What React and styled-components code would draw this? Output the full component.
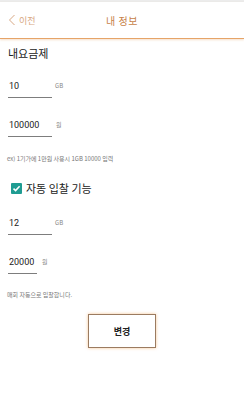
import styled, { createGlobalStyle } from 'styled-components';

const Global = createGlobalStyle`
    html, body {
        margin: 0;
        padding: 0;
        background: #fff;
    }
    body {
        font-family: "Noto Sans CJK KR", "Noto Sans", sans-serif;
        color: #222;
    }
`;

const Page = styled.div`
    width: 244px;
    height: 400px;
    background: #fff;
    border-top: 2px solid #ececec;
    box-sizing: border-box;
`;

const Header = styled.header`
    height: 36px;
    display: grid;
    grid-template-columns: 1fr auto 1fr;
    align-items: center;
    padding: 0 8px;
    border-bottom: 1px solid #e6a468;
    box-shadow: 0 1px 2px rgba(230, 164, 104, 0.35);
`;

const Back = styled.div`
    display: flex;
    align-items: center;
    gap: 3px;
    font-size: 9px;
    color: #d8a884;
`;

const Title = styled.div`
    font-size: 10px;
    color: #c77f48;
    letter-spacing: 0.5px;
`;

const Content = styled.main`
    display: flex;
    flex-direction: column;
    padding: 0 8px;
`;

const Section = styled.div`
    margin-top: 7px;
    font-size: 11px;
    line-height: 14px;
    color: #222;
`;

const Row = styled.div`
    display: flex;
    align-items: flex-start;
    gap: 2px;
    margin-top: ${(p) => p.$top}px;
`;

const Field = styled.div`
    width: ${(p) => p.$width}px;
    font-family: "Roboto", "Noto Sans", sans-serif;
    font-size: 9px;
    line-height: 14px;
    padding: 0 0 4px 1px;
    border-bottom: 1px solid #7d7d7d;
    color: #222;
`;

const Unit = styled.span`
    font-size: 6px;
    line-height: 14px;
    color: #888;
    margin-left: ${(p) => p.$gap || 0}px;
`;

const Note = styled.p`
    margin: ${(p) => p.$top}px 0 0 -1px;
    font-size: 6px;
    line-height: 8px;
    color: #777;
`;

const CheckRow = styled.label`
    display: flex;
    align-items: center;
    gap: 4px;
    margin-top: 18px;
    padding-left: 3px;
    font-size: 11px;
    line-height: 14px;
    color: #222;
`;

const Box = styled.span`
    width: 11px;
    height: 11px;
    background: #1f9c92;
    border-radius: 1px;
    display: flex;
    align-items: center;
    justify-content: center;
`;

const Button = styled.button`
    align-self: center;
    margin-top: 15px;
    width: 68px;
    height: 34px;
    background: #fff;
    border: 1px solid #9b7b60;
    box-shadow: 0 0 3px rgba(240, 150, 60, 0.55);
    font-family: "Noto Sans CJK KR", sans-serif;
    font-weight: 700;
    font-size: 9px;
    color: #222;
`;

export default function App() {
    return (
        <Page>
            <Global />
            <Header>
                <Back>
                    <svg width="8" height="12" viewBox="0 0 8 12">
                        <path d="M6.5 1 L1.5 6 L6.5 11" fill="none" stroke="#d8a884" strokeWidth="1" />
                    </svg>
                    이전
                </Back>
                <Title>내 정보</Title>
                <div />
            </Header>
            <Content>
                <Section>내요금제</Section>
                <Row $top={19}>
                    <Field $width={43}>10</Field>
                    <Unit $gap={1}>GB</Unit>
                </Row>
                <Row $top={20}>
                    <Field $width={43}>100000</Field>
                    <Unit $gap={2}>원</Unit>
                </Row>
                <Note $top={18}>ex) 1기가에 1만원 사용시 1GB 10000 입력</Note>
                <CheckRow>
                    <Box>
                        <svg width="9" height="9" viewBox="0 0 9 9">
                            <path d="M1.5 4.6 L3.6 6.6 L7.6 2.2" fill="none" stroke="#fff" strokeWidth="1.5" />
                        </svg>
                    </Box>
                    자동 입찰 기능
                </CheckRow>
                <Row $top={21}>
                    <Field $width={43}>12</Field>
                    <Unit $gap={1}>GB</Unit>
                </Row>
                <Row $top={20}>
                    <Field $width={28}>20000</Field>
                    <Unit $gap={3}>원</Unit>
                </Row>
                <Note $top={17}>매회 자동으로 입찰합니다.</Note>
                <Button>변경</Button>
            </Content>
        </Page>
    );
}
